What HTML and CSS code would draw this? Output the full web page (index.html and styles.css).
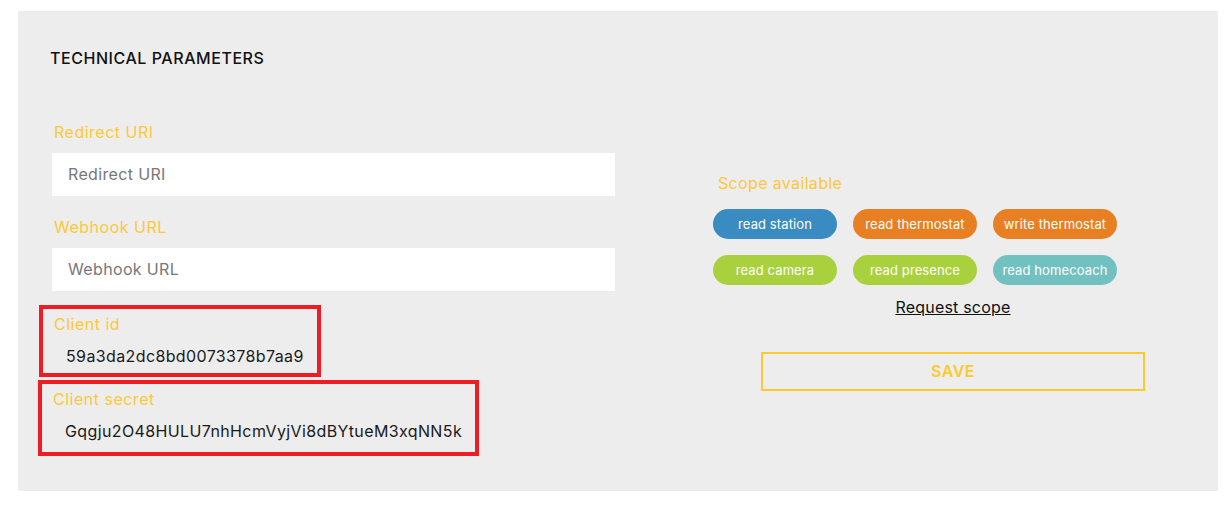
FILE: index.html
```html
<!DOCTYPE html>
<html>
<head>
<meta charset="utf-8">
<link rel="stylesheet" href="styles.css">
</head>
<body>
<div class="panel">
  <h2 class="title">TECHNICAL PARAMETERS</h2>
  <div class="cols">
    <div class="left">
      <div class="field">
        <label class="label">Redirect URI</label>
        <div class="input">Redirect URI</div>
      </div>
      <div class="field">
        <label class="label">Webhook URL</label>
        <div class="input">Webhook URL</div>
      </div>
      <div class="box box-id">
        <div class="label">Client id</div>
        <div class="value">59a3da2dc8bd0073378b7aa9</div>
      </div>
      <div class="box box-secret">
        <div class="label">Client secret</div>
        <div class="value">Gqgju2O48HULU7nhHcmVyjVi8dBYtueM3xqNN5k</div>
      </div>
    </div>
    <div class="right">
      <div class="scope-label">Scope available</div>
      <div class="pills">
        <span class="pill blue">read station</span>
        <span class="pill orange">read thermostat</span>
        <span class="pill orange">write thermostat</span>
        <span class="pill green">read camera</span>
        <span class="pill green">read presence</span>
        <span class="pill teal">read homecoach</span>
      </div>
      <a class="request">Request scope</a>
      <div class="save">SAVE</div>
    </div>
  </div>
</div>
</body>
</html>
```

FILE: styles.css
```css
* { box-sizing: border-box; }
html, body { margin: 0; padding: 0; background: #fff; }
body {
  padding: 11px 0 0 18px;
  font-family: Inter, Lato, sans-serif;
  letter-spacing: 0.35px;
}
.panel {
  width: 1200px;
  height: 480px;
  background: #ededed;
  padding: 38px 0 0 0;
}
.title {
  margin: 0 0 0 32px;
  font-size: 16px;
  font-weight: 500;
  color: #111;
  line-height: 18px;
  letter-spacing: 0.55px;
}
.cols {
  display: flex;
  margin-top: 55px;
}
.left {
  width: 600px;
  padding-left: 21px;
}
.field { margin-left: 13px; width: 563px; }
.label {
  display: block;
  color: #fdc83a;
  font-size: 16px;
  line-height: 20px;
  padding-left: 2px;
  letter-spacing: 0.5px;
}
.field .label { margin-bottom: 11px; }
.field + .field { margin-top: 21px; }
.input {
  height: 43px;
  background: #fff;
  color: #777;
  font-size: 16px;
  line-height: 43px;
  padding-left: 16px;
}
.box {
  border: 4px solid #ee1c25;
  padding: 5px 0 0 11px;
}
.box-id {
  margin-top: 14px;
  width: 282px;
  height: 72px;
}
.box-secret {
  margin-top: 3px;
  margin-left: -1px;
  width: 441px;
  height: 76px;
}
.box .label { padding-left: 0; }
.value {
  font-size: 16px;
  color: #1a1a1a;
  line-height: 20px;
  margin-top: 12px;
  padding-left: 12px;
  letter-spacing: 0.38px;
}
.right {
  width: 480px;
  margin-left: 95px;
  padding-top: 51px;
  display: flex;
  flex-direction: column;
}
.scope-label {
  color: #fdc83a;
  font-size: 16px;
  line-height: 20px;
  padding-left: 5px;
}
.pills {
  display: grid;
  grid-template-columns: repeat(3, 124px);
  column-gap: 16px;
  row-gap: 16px;
  margin-top: 16px;
}
.pill {
  height: 30px;
  border-radius: 15px;
  color: #fff;
  font-size: 13px;
  line-height: 30px;
  text-align: center;
  letter-spacing: 0.1px;
}
.blue { background: #3a8bc1; }
.orange { background: #e87f23; }
.green { background: #a9d13e; }
.teal { background: #72c1c1; }
.request {
  align-self: center;
  margin-top: 12px;
  font-size: 16px;
  color: #111;
  text-decoration: underline;
  line-height: 20px;
  letter-spacing: 0.2px;
}
.save {
  align-self: center;
  margin-top: 35px;
  width: 384px;
  height: 39px;
  border: 2px solid #fcca2e;
  color: #fcca2e;
  font-size: 16px;
  font-weight: 600;
  text-align: center;
  line-height: 35px;
  letter-spacing: 0.5px;
}
```
